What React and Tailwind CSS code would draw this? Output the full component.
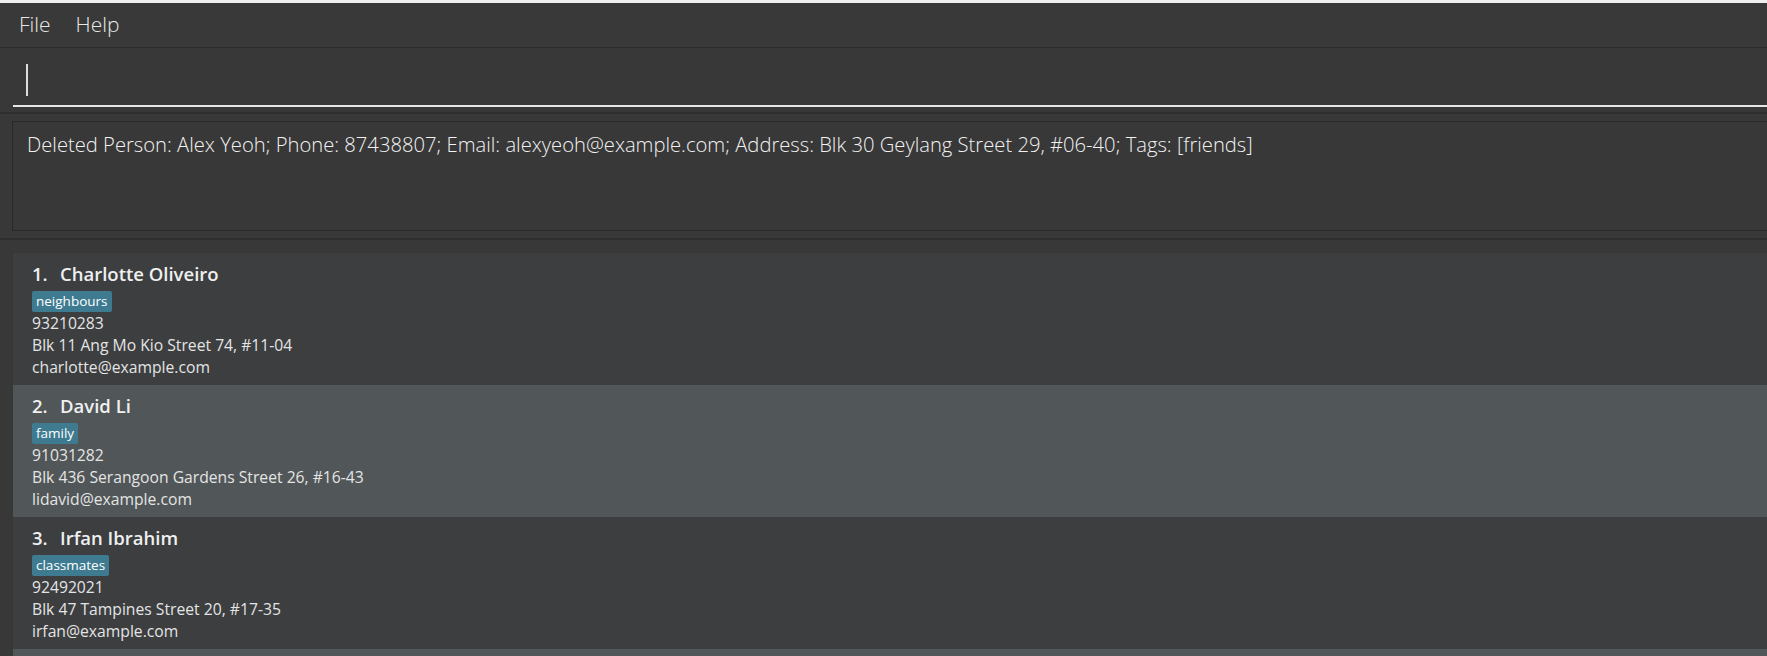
import React from 'react';

const persons = [
  { name: 'Charlotte Oliveiro', tag: 'neighbours', phone: '93210283', address: 'Blk 11 Ang Mo Kio Street 74, #11-04', email: 'charlotte@example.com' },
  { name: 'David Li', tag: 'family', phone: '91031282', address: 'Blk 436 Serangoon Gardens Street 26, #16-43', email: 'lidavid@example.com' },
  { name: 'Irfan Ibrahim', tag: 'classmates', phone: '92492021', address: 'Blk 47 Tampines Street 20, #17-35', email: 'irfan@example.com' },
];

const PersonCard = ({ person, index }) => {
  const odd = index % 2 === 1;
  return (
    <div className={`h-[132px] shrink-0 pl-[19px] pt-[8px] ${odd ? 'bg-[#515658]' : 'bg-[#3c3e40]'}`}>
      <div className="flex text-[18.5px] font-semibold text-[#f0f0f0] leading-[26px]">
        <span className="w-[28px]">{index + 1}.</span>
        <span>{person.name}</span>
      </div>
      <div className="flex mt-[4px]">
        <span className="bg-[#3e7b91] text-white text-[13.5px] leading-[21px] px-[4px] rounded-[2px]">{person.tag}</span>
      </div>
      <div className="text-[15.7px] text-[#e4e4e4] leading-[22px]">
        <div>{person.phone}</div>
        <div>{person.address}</div>
        <div>{person.email}</div>
      </div>
    </div>
  );
};

const App = () => {
  return (
    <div className="w-[1767px] h-[656px] overflow-hidden bg-[#383838] flex flex-col" style={{ fontFamily: '"Open Sans", "Noto Sans", sans-serif' }}>
      <div className="h-[3px] shrink-0 bg-[#eeeff0]" />

      <nav className="h-[45px] shrink-0 flex items-center gap-[25px] pl-[19px] text-[21px] font-light text-[#e8e8e8] bg-[#393939] border-b border-[#2c2c2c]">
        <span>File</span>
        <span>Help</span>
      </nav>

      <section className="h-[66px] shrink-0 pl-[13px] border-b-2 border-[#2e2e2e]">
        <div className="h-[59px] border-b-2 border-[#e6e6e6] pt-[16px] pl-[13px]">
          <div className="w-[2px] h-[32px] bg-[#dcdcdc]" />
        </div>
      </section>

      <section className="h-[126px] shrink-0 pt-[7px] pl-[12px] border-b-2 border-[#2e2e2e]">
        <div className="h-[110px] border border-[#2a2a2a] border-r-0 px-[14px] pt-[8px]">
          <p className="text-[20.2px] font-light text-[#f2f2f2] leading-[28px] whitespace-nowrap">
            Deleted Person: Alex Yeoh; Phone: 87438807; Email: alexyeoh@example.com; Address: Blk 30 Geylang Street 29, #06-40; Tags: [friends]
          </p>
        </div>
      </section>

      <section className="flex-1 min-h-0 overflow-hidden flex flex-col pt-[13px] pl-[13px]">
        {persons.map((p, i) => (
          <PersonCard key={i} person={p} index={i} />
        ))}
        <div className="h-[132px] shrink-0 bg-[#515658]" />
      </section>
    </div>
  );
};

export default App;
